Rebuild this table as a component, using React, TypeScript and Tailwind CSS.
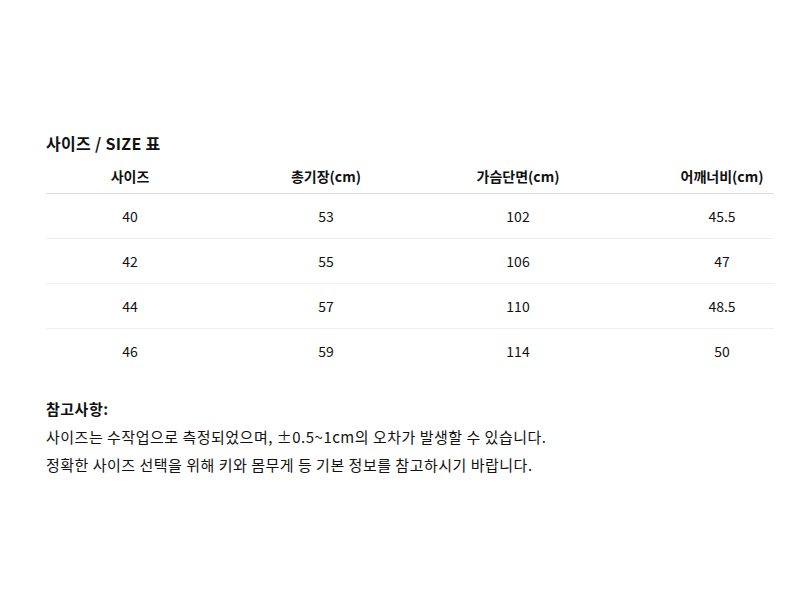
import React from "react";

const rows = [
  ["40", "53", "102", "45.5"],
  ["42", "55", "106", "47"],
  ["44", "57", "110", "48.5"],
  ["46", "59", "114", "50"],
];

const headers = ["사이즈", "총기장(cm)", "가슴단면(cm)", "어깨너비(cm)"];

const colClass = [
  "w-[168px] flex justify-center",
  "w-[224px] flex justify-center",
  "w-[160px] flex justify-center",
  "w-[176px] flex justify-center pl-[72px]",
];

export default function App() {
  return (
    <div
      className="w-[800px] h-[600px] bg-white text-[#111] px-[46px] pt-[131px]"
      style={{ fontFamily: '"Noto Sans CJK KR", "Noto Sans", sans-serif' }}
    >
      <h2 className="text-[16px] leading-[24px] font-bold mb-[5px] tracking-[0.3px]">사이즈 / SIZE 표</h2>
      <div className="w-[728px]">
        <div className="flex h-[34px] items-center border-b border-[#dcdcdc] text-[14px] font-bold">
          {headers.map((h, i) => (
            <div key={h} className={colClass[i]}>
              {h}
            </div>
          ))}
        </div>
        {rows.map((r, ri) => (
          <div
            key={ri}
            className={
              ri < rows.length - 1
                ? "flex h-[45px] items-center border-b border-[#eeeeee] text-[14px]"
                : "flex h-[45px] items-center text-[14px]"
            }
          >
            {r.map((c, i) => (
              <div key={i} className={colClass[i]}>
                {c}
              </div>
            ))}
          </div>
        ))}
      </div>
      <div className="mt-[21px] text-[15px] leading-[28px] tracking-[0.5px]">
        <div className="font-bold">참고사항:</div>
        <div>사이즈는 수작업으로 측정되었으며, ±0.5~1cm의 오차가 발생할 수 있습니다.</div>
        <div>정확한 사이즈 선택을 위해 키와 몸무게 등 기본 정보를 참고하시기 바랍니다.</div>
      </div>
    </div>
  );
}
